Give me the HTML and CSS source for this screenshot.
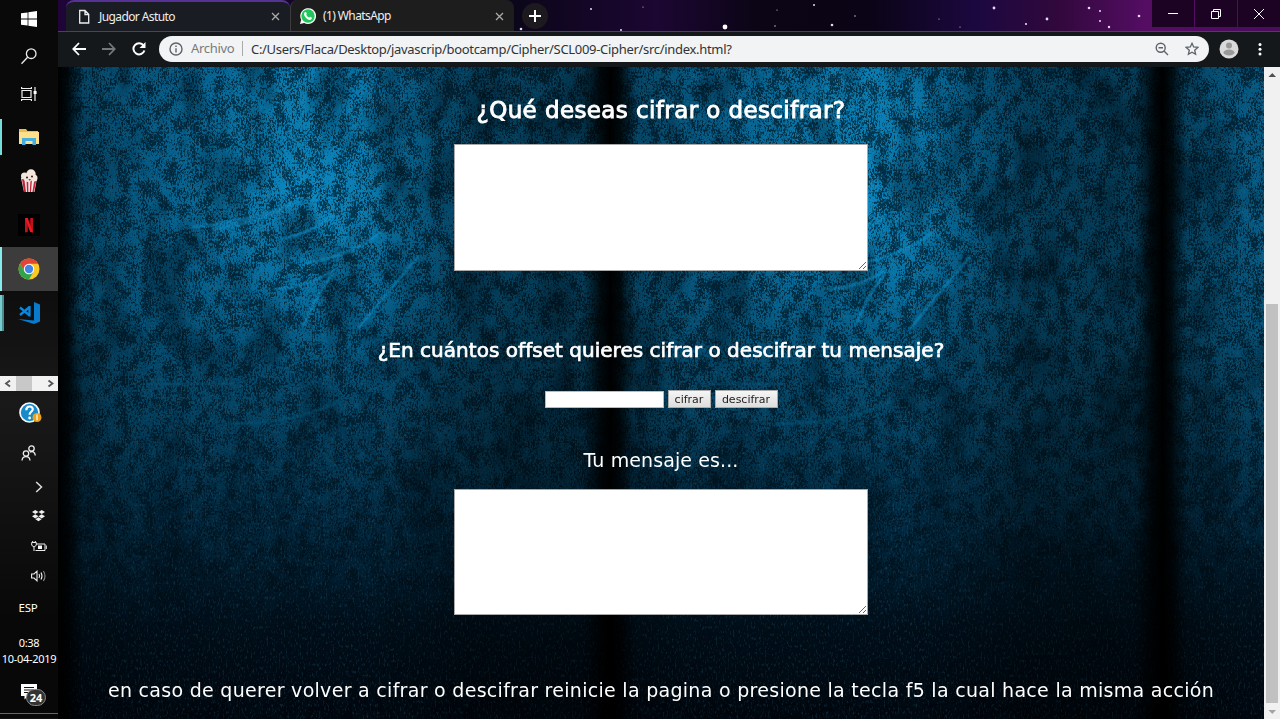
FILE: index.html
```html
<!DOCTYPE html>
<html lang="es">
<head>
<meta charset="utf-8">
<title>Jugador Astuto</title>
<link rel="stylesheet" href="styles.css">
</head>
<body>
<div class="desktop">
  <aside class="taskbar">
    <div class="slot start"><svg width="16" height="16" viewBox="0 0 16 16" fill="#fff"><path d="M0 2.3 6.6 1.4V7.6H0zM7.4 1.2 16 0V7.6H7.4zM0 8.4H6.6V14.6L0 13.7zM7.4 8.4H16V16L7.4 14.8z"/></svg></div>
    <div class="slot search"><svg width="18" height="18" viewBox="0 0 18 18" fill="none" stroke="#eee" stroke-width="1.3"><circle cx="11.2" cy="6.7" r="4.800"/><path d="M7.6 10.3 1.500 16.8"/></svg></div>
    <div class="slot tasks"><svg width="18" height="16" viewBox="0 0 18 16" fill="none" stroke="#eee" stroke-width="1.2"><path d="M2 4.5H11V11.5H2zM1.6 1V2.5H11.4V1M1.6 15V13.5H11.4V15M15 1V15"/><path d="M13.6 5H16.6V8H13.6z" fill="#fff" stroke="none"/></svg></div>
    <div class="slot app app-open"><svg width="22" height="18" viewBox="0 0 22 18"><path d="M1 1H8L9.5 3H20V16H1z" fill="#e8bd54"/><path d="M1 4H21V16H1z" fill="#ffe08a"/><path d="M4 10H18V17H14.5V13H7.5V17H4z" fill="#45ade0"/></svg></div>
    <div class="slot app"><svg width="18" height="24" viewBox="0 0 18 24"><path d="M1 9H17L14.5 23H4z" fill="#f4e8e8"/><path d="M2 10H4.3L6 23H4zM6.5 10H8.2L8.4 23H7zM10.5 10H12L11 23H9.8zM14.5 10H16.6L14 23H12.4z" fill="#c22437"/><g fill="#f3e6dc"><circle cx="4.5" cy="7" r="3.5"/><circle cx="11" cy="5" r="4.7"/><circle cx="14" cy="9" r="3.5"/><circle cx="8" cy="9" r="4"/></g><g fill="#31191b"><circle cx="7" cy="8.5" r="1"/><circle cx="12" cy="7.5" r="1"/><path d="M8.3 10H11L9.8 12z" fill="#bd394b"/></g></svg></div>
    <div class="slot app"><svg width="22" height="22" viewBox="0 0 22 22"><path d="M0 0H22V22H0z" fill="#000"/><path d="M7 4H9.8V18L7 18.5zM12.2 4H15V18.5L12.2 17.8z" fill="#bd111b"/><path d="M7 4H9.8L15 18.4 12.2 18z" fill="#ee1822"/></svg></div>
    <div class="slot app app-active"><svg width="22" height="22" viewBox="0 0 22 22"><circle cx="11" cy="11" r="10.5" fill="#fbc926"/><path d="M1.9 5.8A10.5 10.5 0 0 1 20.1 5.8H11L6.5 13.6z" fill="#e34436"/><path d="M1.9 5.8 6.5 13.6 11 16.2 15.5 13.6 11 21.5A10.5 10.5 0 0 1 1.9 5.8" fill="#31a350"/><circle cx="11" cy="11" r="5.2" fill="#fff"/><circle cx="11" cy="11" r="4.2" fill="#4284e8"/></svg></div>
    <div class="slot app app-stacked"><svg width="24" height="24" viewBox="0 0 24 24"><path d="M17 1 23 3.5V20.5L17 23 1 18 17 19.5z" fill="#087bcc"/><path d="M3 6.5 12 14M3 14 12 6.5M12.5 5V15.5" fill="none" stroke="#0c86d8" stroke-width="2.3"/></svg></div>
    <div class="rail"><svg width="58" height="15" viewBox="0 0 58 15"><path d="M0 0H58V15H0z" fill="#f1f1f1"/><path d="M16 0H32V15H16z" fill="#c8c8c8"/><path d="M10 4.5 6 7.5 10 10.5M48.500 4.500 52.500 7.500 48.500 10.500" fill="none" stroke="#555" stroke-width="1.8"/></svg></div>
    <div class="slot help"><svg width="23" height="22" viewBox="0 0 23 22"><circle cx="10.500" cy="10.500" r="9.500" fill="#178ac9" stroke="#f5f9fb" stroke-width="1.700"/><path d="M7.300 8.200C7.300 3.200 14.200 3.500 13.700 7.700 13.400 9.800 10.600 10 10.600 12.800" fill="none" stroke="#fff" stroke-width="2.200"/><circle cx="10.600" cy="16" r="1.400" fill="#fff"/><circle cx="18" cy="15.500" r="4.500" fill="#eca11d"/><path d="M18 12.500V18.300" stroke="#fff3cf" stroke-width="1.400"/></svg></div>
    <div class="slot people"><svg width="16" height="16" viewBox="0 0 16 16" fill="none" stroke="#eee" stroke-width="1.300"><circle cx="10.500" cy="3.500" r="2.700"/><circle cx="5" cy="8.500" r="2.700"/><path d="M1 15.500C1.500 10.300 8.500 10.300 9 15.500M9 7.300C11.500 5.300 14 7.500 14.300 10.500"/></svg></div>
    <div class="slot tray tray-more"><svg width="8" height="12" viewBox="0 0 8 12" fill="none" stroke="#ddd" stroke-width="1.500"><path d="M1.200 1 6.500 6 1.200 11"/></svg></div>
    <div class="slot tray"><svg width="13" height="12" viewBox="0 0 13 12" fill="#eee"><path d="M3.300 0 6.500 2 3.300 4.100 0 2zM9.700 0 13 2 9.700 4.100 6.500 2zM3.300 4.200 6.500 6.300 3.300 8.400 0 6.300zM9.700 4.200 13 6.300 9.700 8.400 6.500 6.300zM3.400 9.200 6.500 7.200 9.600 9.200 6.500 11.300z"/></svg></div>
    <div class="slot tray"><svg width="16" height="11" viewBox="0 0 16 11" fill="none" stroke="#eee"><path d="M5.500 3H14V9.500H4.500M.7 1.500H5.300V4.300L3 6 .7 4.300zM1.700 0V2M4.300 0V2M3 6V10"/><path d="M7 4.500H11V8H7z" fill="#fff" stroke="none"/><path d="M15.300 4.500V8"/></svg></div>
    <div class="slot tray"><svg width="16" height="12" viewBox="0 0 16 12" fill="none" stroke="#eee" stroke-width="1.100"><path d="M.6 4H3L6 1.200V10.800L3 8H.6z"/><path d="M8 4Q9.200 6 8 8M10 2.500Q12 6 10 9.500"/><path d="M12.400 1Q15.600 6 12.400 11" stroke="#888"/></svg></div>
    <div class="slot language">ESP</div>
    <div class="clock"><span>0:38</span><span>10-04-2019</span></div>
    <div class="slot notices"><svg width="16" height="16" viewBox="0 0 16 16"><path d="M0 0H16V12H7L3.500 15.500V12H0z" fill="#fff"/><path d="M3 3.500H13M3 6H13M3 8.500H9" stroke="#111"/></svg><b class="badge">24</b></div>
  </aside>

  <main class="browser">
    <header class="tabstrip">
      <svg class="stars" width="1222" height="31" viewBox="0 0 1222 31" fill="#e8d6ff">
        <circle cx="667" cy="27" r="2.400" fill="#fff"/><circle cx="774" cy="25" r="1.300"/><circle cx="756" cy="5" r="1"/><circle cx="936" cy="8" r="1.400"/><circle cx="989" cy="19" r="1.400"/><circle cx="968" cy="24" r="1.100"/><circle cx="1031" cy="8" r="1.300"/><circle cx="1042" cy="11" r="1"/><circle cx="1042" cy="21" r="1"/><circle cx="1051" cy="27" r="1.200"/><circle cx="1081" cy="16" r="1.300"/><circle cx="533" cy="9" r="1"/><circle cx="585" cy="7" r=".6"/><circle cx="717" cy="26" r=".7"/><circle cx="797" cy="16" r=".7"/><circle cx="719" cy="10" r=".6"/><circle cx="881" cy="19" r=".6"/><circle cx="902" cy="27" r=".6"/><circle cx="563" cy="30" r="1"/><circle cx="463" cy="29" r="1.300"/>
      </svg>
      <div class="tab tab-current">
        <svg class="tab-icon" width="16" height="16" viewBox="0 0 16 16" fill="none" stroke="#eee" stroke-width="1.300"><path d="M2.700 1.500H8L11.700 5.200V14H2.700zM8 1.500V5.500H11.700"/></svg>
        <span class="tab-title title-current">Jugador Astuto</span>
        <svg width="9" height="9" viewBox="0 0 9 9" stroke="#aaa" stroke-width="1.300"><path d="M1 1 8 8M8 1 1 8"/></svg>
      </div>
      <div class="tab tab-other">
        <svg class="tab-icon" width="16" height="16" viewBox="0 0 16 16"><path d="M0 16 1.200 11.800A7.900 7.900 0 1 1 4.200 14.900z" fill="#fff"/><circle cx="8" cy="8" r="6.700" fill="#21c55c"/><path d="M4.700 4.300Q6 3.400 6.500 5 7.200 6 6.200 6.700 7 8.800 9.300 9.700 10 8.400 10.800 9.100 12.600 9.700 11.600 11 9.500 13.200 6 10 2.800 6.600 4.700 4.300" fill="#fff"/></svg>
        <span class="tab-title title-other">(1) WhatsApp</span>
        <svg width="9" height="9" viewBox="0 0 9 9" stroke="#aaa" stroke-width="1.300"><path d="M1 1 8 8M8 1 1 8"/></svg>
      </div>
      <div class="new-tab"><svg width="12" height="12" viewBox="0 0 12 12" stroke="#fff" stroke-width="2"><path d="M6 0V12M0 6H12"/></svg></div>
      <div class="window-buttons">
        <div class="window-button"><svg width="10" height="10" viewBox="0 0 10 10" stroke="#fff"><path d="M0 4.500H10"/></svg></div>
        <div class="window-button"><svg width="10" height="10" viewBox="0 0 10 10" fill="none" stroke="#fff"><path d="M.5 2.500H7.500V9.500H.5zM2.500 2.500V.5H9.500V7.500H7.500"/></svg></div>
        <div class="window-button"><svg width="10" height="10" viewBox="0 0 10 10" stroke="#fff"><path d="M0 0 10 10M10 0 0 10"/></svg></div>
      </div>
    </header>

    <nav class="toolbar">
      <svg class="nav-icon" width="14" height="14" viewBox="0 0 14 14" fill="none" stroke="#fff" stroke-width="1.800"><path d="M14 7H1.500M7 1 1.300 7 7 13"/></svg>
      <svg class="nav-icon" width="14" height="14" viewBox="0 0 14 14" fill="none" stroke="#777" stroke-width="1.800"><path d="M0 7H12.500M7 1 12.700 7 7 13"/></svg>
      <svg class="nav-icon" width="14" height="14" viewBox="0 0 14 14" fill="none" stroke="#fff" stroke-width="2"><path d="M11.600 3.500A5.600 5.600 0 1 0 12.400 8.500"/><path d="M13.500 0V6H7.500z" fill="#fff" stroke="none"/></svg>
      <div class="address">
        <svg width="14" height="14" viewBox="0 0 14 14" fill="none" stroke="#5f6368" stroke-width="1.400"><circle cx="7" cy="7" r="6"/><path d="M7 6.200V10.500M7 3.500V5"/></svg>
        <span class="scheme">Archivo</span>
        <span class="url">C:/Users/Flaca/Desktop/javascrip/bootcamp/Cipher/SCL009-Cipher/src/index.html?</span>
        <svg class="magnifier" width="14" height="14" viewBox="0 0 14 14" fill="none" stroke="#5f6368" stroke-width="1.400"><circle cx="5.700" cy="5.700" r="4.500"/><path d="M9 9 13 13M3.500 5.700H8"/></svg>
        <svg width="14" height="14" viewBox="0 0 14 14" fill="none" stroke="#5f6368" stroke-width="1.300"><path d="M7 1.300 8.700 5 12.800 5.400 9.700 8.200 10.600 12.300 7 10.200 3.400 12.300 4.300 8.200 1.200 5.400 5.300 5z"/></svg>
      </div>
      <svg class="profile" width="20" height="20" viewBox="0 0 20 20"><circle cx="10" cy="10" r="9.500" fill="#dadada"/><circle cx="10" cy="6.500" r="3" fill="#999"/><ellipse cx="10" cy="13.500" rx="5.500" ry="3" fill="#999"/></svg>
      <svg class="menu-dots" width="4" height="14" viewBox="0 0 4 14" fill="#fff"><circle cx="2" cy="2.500" r="1.500"/><circle cx="2" cy="7.300" r="1.500"/><circle cx="2" cy="12" r="1.500"/></svg>
    </nav>

    <div class="viewport">
      <section class="page">
        <svg class="wall" width="1206" height="652" viewBox="0 0 1206 652" preserveAspectRatio="none">
          <defs>
            <linearGradient id="base" x1="0" y1="0" x2="0" y2="1"><stop offset="0" stop-color="#076391"/><stop offset=".35" stop-color="#075e89"/><stop offset=".52" stop-color="#06496b"/><stop offset=".7" stop-color="#032b43"/><stop offset=".86" stop-color="#01101c"/><stop offset="1" stop-color="#00050c"/></linearGradient>
            <linearGradient id="seam"><stop offset="0" stop-color="#000"/><stop offset=".018" stop-color="#000" stop-opacity=".85"/><stop offset=".045" stop-color="#000" stop-opacity=".3"/><stop offset=".15" stop-color="#000" stop-opacity=".1"/><stop offset=".55" stop-color="#000" stop-opacity="0"/><stop offset=".75" stop-color="#000" stop-opacity=".33"/><stop offset=".95" stop-color="#000" stop-opacity=".38"/><stop offset=".98" stop-color="#000" stop-opacity=".85"/><stop offset="1" stop-color="#000"/></linearGradient>
            <radialGradient id="glow"><stop offset="0" stop-color="#109cdb" stop-opacity=".8"/><stop offset=".5" stop-color="#0c8ac2" stop-opacity=".5"/><stop offset="1" stop-color="#0878b0" stop-opacity="0"/></radialGradient>
            <filter id="rough" x="0" y="0" width="100%" height="100%" color-interpolation-filters="sRGB"><feTurbulence type="fractalNoise" baseFrequency=".083 .061" numOctaves="2" seed="8" result="large"/><feTurbulence type="fractalNoise" baseFrequency=".61 .43" numOctaves="2" seed="17" result="fine"/><feComposite in="large" in2="fine" operator="arithmetic" k2=".4" k3=".6"/><feColorMatrix values="0 0 0 0 0  0 0 0 0 .055  0 0 0 0 .09  8 0 0 0 -3.65"/></filter>
            <filter id="stains" x="0" y="0" width="100%" height="100%" color-interpolation-filters="sRGB"><feTurbulence type="fractalNoise" baseFrequency=".023 .013" numOctaves="5" seed="21"/><feColorMatrix values="0 0 0 0 0  0 0 0 0 .05  0 0 0 0 .09  4 0 0 0 -1.9"/></filter>
            <filter id="flecks" x="0" y="0" width="100%" height="100%" color-interpolation-filters="sRGB"><feTurbulence type="fractalNoise" baseFrequency=".57 .27" numOctaves="3" seed="4"/><feColorMatrix values="0 0 0 0 .2  0 0 0 0 .48  0 0 0 0 .6  4 0 0 0 -2.2"/></filter>
            <filter id="soft"><feGaussianBlur stdDeviation="1"/></filter>
            <g id="panel">
              <path d="M0 0H553V652H0z" fill="url(#base)"/>
              <ellipse cx="245" cy="125" rx="190" ry="185" fill="url(#glow)"/>
              <ellipse cx="245" cy="0" rx="130" ry="160" fill="url(#glow)" opacity=".55"/>
            </g>
            <g id="scratches" fill="none" stroke="#149ddd" stroke-linecap="round" filter="url(#soft)">
              <path d="M135 160Q195 155 235 136M155 163Q200 155 225 143" stroke-width="2"/><path d="M225 172Q260 163 275 148M248 196Q290 190 322 166M218 222Q250 220 276 203" stroke-width="2"/><path d="M360 190Q335 218 300 262M275 207Q260 224 246 258" stroke-width="2"/><path d="M165 357Q235 357 280 335M90 317H175" stroke="#07577b" stroke-width="2"/>
            </g>
            <path id="shade" d="M0 0H553V652H0z" fill="url(#seam)"/>
          </defs>
          <use href="#panel"/><use href="#panel" x="552"/><use href="#panel" x="1104"/>
          <path d="M0 0H1206V652H0z" filter="url(#stains)" opacity=".36"/>
          <path d="M0 0H1206V652H0z" filter="url(#rough)" opacity=".65"/>
          <g opacity=".75"><use href="#scratches"/><use href="#scratches" x="552"/></g>
          <path d="M0 0H1206V652H0z" filter="url(#flecks)" opacity=".24"/>
          <use href="#shade"/><use href="#shade" x="552"/><use href="#shade" x="1104"/>
        </svg>
        <div class="content">
          <h1 class="line question"><span>¿Qué deseas cifrar o descifrar?</span></h1>
          <textarea class="box" aria-label="Mensaje"></textarea>
          <h2 class="line offset"><span>¿En cuántos offset quieres cifrar o descifrar tu mensaje?</span></h2>
          <div class="controls"><input class="number" type="text" aria-label="Offset"><button class="button cipher">cifrar</button><button class="button decipher">descifrar</button></div>
          <p class="line result">Tu mensaje es...</p>
          <textarea class="box" aria-label="Resultado"></textarea>
          <p class="line note">en caso de querer volver a cifrar o descifrar reinicie la pagina o presione la tecla f5 la cual hace la misma acción</p>
        </div>
      </section>
      <div class="scrollbar"><svg width="16" height="652" viewBox="0 0 16 652"><path d="M0 0H16V652H0z" fill="#f1f1f1"/><path d="M4.500 10H12L8.250 6z" fill="#505050"/><path d="M2 237H14V636H2z" fill="#c1c1c1"/><path d="M4.500 643H12L8.250 647z" fill="#a3a3a3"/></svg></div>
    </div>
  </main>
</div>
</body>
</html>
```
FILE: styles.css
```css
* { box-sizing: border-box; }
body { margin: 0; overflow: hidden; background: #000; font-family: "Noto Sans", sans-serif; }
svg { display: block; flex: none; }
.desktop { display: flex; width: 1280px; height: 719px; }

.taskbar { width: 58px; display: flex; flex-direction: column; background: linear-gradient(#090909, #090909 250px, #191919 400px, #141414 470px, #080808 620px); color: #fff; border-bottom: 1px solid #111; }
.slot { flex: none; display: flex; align-items: center; justify-content: center; height: 30px; }
.start { height: 37px; }
.search { height: 38px; }
.tasks { height: 40px; padding-bottom: 3px; }
.app { height: 44px; }
.app-open { background: linear-gradient(#76dddd, #76dddd) 0 4px / 2px 36px no-repeat; }
.app-active { background: #3c3c3c; border-left: 2px solid #86eced; padding-right: 2px; }
.app-stacked { background: linear-gradient(#76cccc, #76cccc) 0 4px / 2px 36px no-repeat, linear-gradient(#4b8c8e, #4b8c8e) 2px 4px / 2px 36px no-repeat; }
.rail { margin-top: 41px; height: 15px; width: 58px; }
.help { height: 43px; padding-left: 2px; }
.people { height: 38px; }
.tray { padding-left: 19px; }
.tray-more { height: 29px; }
.language { height: 32px; padding-right: 2px; font-size: 11.5px; letter-spacing: -.3px; }
.clock { height: 48px; padding-top: 12px; display: flex; flex-direction: column; align-items: center; font-size: 11px; line-height: 16px; letter-spacing: -.3px; white-space: nowrap; }
.notices { height: 43px; position: relative; border-bottom: 1px solid #666; }
.badge { position: absolute; left: 26px; top: 18px; width: 20px; height: 17px; border: 1px solid #888; border-radius: 9px; background: #333; font-size: 11px; line-height: 15px; text-align: center; }

.browser { width: 1222px; display: flex; flex-direction: column; }
.tabstrip { position: relative; height: 31px; display: flex; padding-left: 8px; background: linear-gradient(90deg, #200438 0, #0b0619 450px, #1c0632 600px, #0b0515 700px, #0a0416 810px, #1c0840 920px, #31083c 1000px, #550d64 1090px, #4b0c5c 1222px); }
.stars { position: absolute; left: 0; top: 0; }
.tab { position: relative; height: 31px; width: 224px; display: flex; align-items: center; padding: 1px 10px 0 11px; border-radius: 8px 8px 0 0; }
.tab-current { background: #191c22; border-top: 2px solid #553294; padding-top: 0; }
.tab-other { background: #1d1d1d; border-left: 1px solid #3d3d40; padding-left: 9px; }
.tab-title { flex: 1; margin-left: 6px; color: #eee; font-size: 12px; line-height: 16px; white-space: nowrap; }
.title-current { letter-spacing: -.6px; }
.title-other { margin-left: 7px; letter-spacing: -.6px; }
.new-tab { position: relative; width: 26px; height: 26px; margin: 3px 0 0 8px; border-radius: 50%; background: #1c1a1f; display: flex; align-items: center; justify-content: center; }
.window-buttons { position: relative; margin-left: auto; display: flex; gap: 1px; height: 27px; }
.window-button { width: 42px; background: #1c0323; display: flex; align-items: center; justify-content: center; }

.toolbar { height: 35px; display: flex; align-items: center; padding: 0 0 1px 14px; background: #15181b; border-top: 1px solid #45474b; }
.nav-icon { margin-right: 16px; }
.address { margin-left: -3px; width: 1050px; height: 26px; border-radius: 13px; background: #f1f3f4; display: flex; align-items: center; padding: 0 10px; }
.scheme { margin-left: 8px; width: 52px; height: 15px; border-right: 1px solid #aaa; color: #777b80; font-size: 13px; line-height: 14px; letter-spacing: -.3px; }
.url { margin-left: 8px; color: #303337; font-size: 13px; line-height: 18px; letter-spacing: -.31px; white-space: nowrap; }
.magnifier { margin: 0 16px 0 auto; }
.profile { margin-left: 10px; }
.menu-dots { margin-left: 19px; }

.viewport { display: flex; height: 653px; padding-top: 1px; background: #11161a; }
.page { position: relative; width: 1206px; height: 652px; overflow: hidden; }
.wall { position: absolute; inset: 0; }
.content { position: relative; display: flex; flex-direction: column; align-items: center; padding-top: 28px; color: #fff; font-family: "DejaVu Sans", sans-serif; }
.line { margin: 0; white-space: nowrap; font-weight: 400; line-height: 30px; }
.question { font-size: 23px; letter-spacing: .4px; -webkit-text-stroke: .9px #fff; }
.box { display: block; width: 414px; height: 127px; margin: 19px 0 0; border: 1px solid #a9a9a9; background: #fff; resize: both; outline: 0; }
.offset { margin-top: 64px; font-size: 20px; letter-spacing: .03px; -webkit-text-stroke: .7px #fff; }
.controls { display: flex; align-items: center; height: 18px; margin-top: 25px; gap: 4px; }
.number { width: 119px; height: 17px; padding: 0; border: 1px solid #bbb; }
.button { height: 18px; padding: 0; border: 1px solid #aaa; background: linear-gradient(#f5f5f5, #ddd); color: #222; font: 11px/15px "DejaVu Sans", sans-serif; }
.cipher { width: 43px; }
.decipher { width: 63px; }
.result { margin-top: 37px; font-size: 19px; letter-spacing: .1px; }
.result + .box { margin-top: 14px; height: 126px; }
.note { margin-top: 60px; font-size: 19px; letter-spacing: .29px; }
```
